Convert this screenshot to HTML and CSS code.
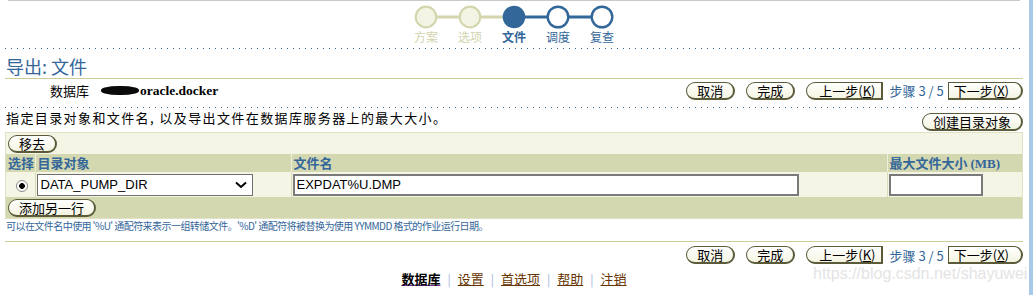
FILE: index.html
```html
<!DOCTYPE html>
<html lang="zh">
<head>
<meta charset="utf-8">
<title>导出: 文件</title>
<link rel="stylesheet" href="styles.css">
</head>
<body>
<div class="page">
  <main class="main">
    <div class="topline"></div>
    <nav class="train">
      <svg class="train-svg" width="200" height="24" viewBox="0 0 200 24">
        <line x1="12" y1="12" x2="100" y2="12" stroke="#d4d6ae" stroke-width="3"/>
        <line x1="100" y1="12" x2="188" y2="12" stroke="#336699" stroke-width="3"/>
        <circle cx="12" cy="12" r="10.3" fill="#f4f4e4" stroke="#d4d6ae" stroke-width="2.2"/>
        <circle cx="56" cy="12" r="10.3" fill="#f4f4e4" stroke="#d4d6ae" stroke-width="2.2"/>
        <circle cx="100" cy="12" r="11.3" fill="#336699"/>
        <circle cx="144" cy="12" r="10.3" fill="#fff" stroke="#336699" stroke-width="2.4"/>
        <circle cx="188" cy="12" r="10.3" fill="#fff" stroke="#336699" stroke-width="2.4"/>
      </svg>
      <div class="train-labels">
        <span class="step done">方案</span>
        <span class="step done">选项</span>
        <span class="step current">文件</span>
        <span class="step todo">调度</span>
        <span class="step todo">复查</span>
      </div>
    </nav>
    <div class="dots"></div>
    <h1 class="title">导出: 文件</h1>
    <div class="head-row">
      <div class="db-info">
        <span class="db-label">数据库</span>
        <span class="db-value"><span class="blot"></span>oracle.docker</span>
      </div>
      <div class="nav-buttons">
        <button class="btn">取消</button>
        <button class="btn">完成</button>
        <button class="btn btn-prev">上一步(<u>K</u>)</button>
        <span class="step-count">步骤 3 / 5</span>
        <button class="btn btn-next">下一步(<u>X</u>)</button>
      </div>
    </div>
    <div class="dots dots-2"></div>
    <div class="instr-row">
      <span class="instr">指定目录对象和文件名, 以及导出文件在数据库服务器上的最大大小。</span>
      <button class="btn">创建目录对象</button>
    </div>
    <div class="table-box">
      <div class="tb-toolbar"><button class="btn btn-small">移去</button></div>
      <table class="grid">
        <colgroup>
          <col class="c1"><col class="c2"><col class="c3"><col class="c4">
        </colgroup>
        <thead>
          <tr><th>选择</th><th>目录对象</th><th>文件名</th><th>最大文件大小 <span class="mb">(MB)</span></th></tr>
        </thead>
        <tbody>
          <tr>
            <td class="radio-cell"><input type="radio" name="sel" class="radio" checked></td>
            <td>
              <div class="select-wrap">
                <select class="select"><option>DATA_PUMP_DIR</option></select>
                <svg class="chev" width="12" height="8" viewBox="0 0 12 8"><path d="M1 1.5 L6 6 L11 1.5" fill="none" stroke="#000" stroke-width="2"/></svg>
              </div>
            </td>
            <td><input class="text-in file-in" type="text" value="EXPDAT%U.DMP"></td>
            <td><input class="text-in size-in" type="text" value=""></td>
          </tr>
        </tbody>
      </table>
      <div class="tb-footer"><button class="btn btn-small">添加另一行</button></div>
    </div>
    <p class="hint">可以在文件名中使用 '%U' 通配符来表示一组转储文件。'%D' 通配符将被替换为使用 YYMMDD 格式的作业运行日期。</p>
    <div class="bottom-bar">
      <div class="nav-buttons">
        <button class="btn">取消</button>
        <button class="btn">完成</button>
        <button class="btn btn-prev">上一步(<u>K</u>)</button>
        <span class="step-count">步骤 3 / 5</span>
        <button class="btn btn-next">下一步(<u>X</u>)</button>
      </div>
    </div>
    <footer class="links">
      <a class="lnk active" href="#">数据库</a><span class="sep">|</span>
      <a class="lnk" href="#">设置</a><span class="sep">|</span>
      <a class="lnk" href="#">首选项</a><span class="sep">|</span>
      <a class="lnk" href="#">帮助</a><span class="sep">|</span>
      <a class="lnk" href="#">注销</a>
    </footer>
  </main>
  <div class="strip"></div>
  <div class="watermark">https://blog.csdn.net/shayuwei</div>
</div>
</body>
</html>
```

FILE: styles.css
```css
* { box-sizing: border-box; }
html, body { margin: 0; padding: 0; }
body {
  font-family: "Noto Sans CJK SC", "Liberation Sans", sans-serif;
  font-size: 13px;
  color: #000;
  background: #fff;
}
.page {
  display: flex;
  height: 295px;
  position: relative;
  overflow: hidden;
}
.main {
  flex: 1;
  padding: 0 6px 0 5px;
}
.strip {
  width: 4px;
  background: #a9c9e9;
}
.topline {
  height: 1px;
  background: #c9c9c9;
  margin: 0 3px;
}
.train {
  display: flex;
  flex-direction: column;
  align-items: center;
  margin-top: 4px;
}
.train-svg { display: block; }
.train-labels {
  display: flex;
  margin-top: 1px;
}
.step {
  width: 44px;
  text-align: center;
  font-size: 12px;
  line-height: 14px;
}
.step.done { color: #d2d4ae; }
.step.current { color: #336699; font-weight: bold; }
.step.todo { color: #336699; }
.dots {
  height: 1px;
  margin-top: 4px;
  background: repeating-linear-gradient(to right, #336699 0 1px, transparent 1px 6px);
}
.title {
  margin: 6px 0 0;
  font-size: 18px;
  line-height: 22px;
  font-weight: normal;
  color: #336699;
  padding: 0 0 1px 1px;
  border-bottom: 1px solid #cccc99;
}
.head-row {
  display: flex;
  justify-content: space-between;
  align-items: center;
  padding-top: 2px;
  height: 21px;
}
.db-info {
  display: flex;
  align-items: center;
  padding-left: 45px;
}
.db-label { width: 54px; }
.db-value {
  font-family: "Liberation Serif", serif;
  font-weight: bold;
  font-size: 13.5px;
  display: inline-flex;
  align-items: center;
}
.blot {
  display: inline-block;
  width: 38px;
  height: 9px;
  background: #0a0a0a;
  border-radius: 45%;
  margin-right: 1px;
  margin-left: -3px;
}
.nav-buttons {
  display: flex;
  align-items: center;
}
.btn {
  font-family: "Noto Sans CJK SC", "Liberation Sans", sans-serif;
  font-size: 13px;
  line-height: 15px;
  height: 18px;
  padding: 0 10px;
  margin: 0;
  color: #000;
  background: linear-gradient(#ffffff, #f4f4e2);
  border: 1px solid #5b5b3a;
  border-right-width: 2px;
  border-bottom-width: 2px;
  border-radius: 9px;
  cursor: pointer;
}
.nav-buttons .btn + .btn { margin-left: 11px; }
.btn u { text-decoration: underline; }
.btn-prev {
  border-radius: 9px 0 0 9px;
  padding: 0 6px 0 12px;
}
.btn-next {
  border-radius: 0 9px 9px 0;
  padding: 0 12px 0 5px;
}
.step-count {
  color: #336699;
  margin: 0 4px 0 6px;
}
.nav-buttons .btn-next { margin-left: 0; }
.dots-2 { margin-top: 7px; }
.instr-row {
  display: flex;
  justify-content: space-between;
  align-items: flex-start;
  padding-top: 5px;
  height: 24px;
}
.instr {
  margin-left: 1px;
  margin-top: -3px;
  letter-spacing: 1.4px;
  line-height: 16px;
}
.table-box {
  background: #f5f5e6;
  border: 1px solid #dfe2c4;
}
.tb-toolbar {
  height: 21px;
  padding: 1px 0 0 2px;
}
.btn-small { padding: 0 10px; }
.grid {
  width: 100%;
  border-collapse: collapse;
  table-layout: fixed;
}
.c1 { width: 29px; }
.c2 { width: 256px; }
.c3 { width: 596px; }
.grid th {
  background: #d3d8b1;
  color: #336699;
  font-weight: bold;
  text-align: left;
  height: 18px;
  padding: 0 0 0 2px;
  line-height: 16px;
  border-left: 1px solid #eef0dc;
  white-space: nowrap;
}
.grid th:first-child { border-left: none; }
.mb {
  font-family: "Liberation Serif", serif;
}
.grid td {
  height: 25px;
  padding: 0 0 0 1px;
  border-left: 1px solid #d8dcb8;
  vertical-align: middle;
}
.grid td:first-child { border-left: none; }
.radio-cell { text-align: center; }
.radio {
  appearance: none;
  -webkit-appearance: none;
  width: 12px;
  height: 12px;
  margin: 0 0 0 2px;
  border-radius: 50%;
  border: 1px solid #8a8a8a;
  background: radial-gradient(circle, #000 0 2.6px, #fff 3.1px);
  vertical-align: middle;
}
.select-wrap {
  position: relative;
  width: 216px;
}
.select {
  appearance: none;
  -webkit-appearance: none;
  display: block;
  width: 216px;
  height: 22px;
  border: 1px solid #6f6f6f;
  border-radius: 0;
  background: #fff;
  font-family: "Liberation Sans", sans-serif;
  font-size: 13px;
  padding: 0 0 0 3px;
  color: #000;
}
.chev {
  position: absolute;
  right: 6px;
  top: 7px;
  pointer-events: none;
}
.text-in {
  display: block;
  height: 22px;
  border: 2px solid #7a7a7a;
  border-radius: 0;
  background: #fff;
  font-family: "Liberation Sans", sans-serif;
  font-size: 13px;
  padding: 0 0 0 2px;
  color: #000;
}
.file-in { width: 506px; }
.size-in { width: 94px; }
.tb-footer {
  background: #d3d8b1;
  height: 21px;
  padding: 1px 0 0 2px;
}
.hint {
  margin: 0;
  padding: 1px 0 0 1px;
  font-size: 10px;
  letter-spacing: -0.55px;
  line-height: 12px;
  height: 22px;
  color: #336699;
}
.bottom-bar {
  border-top: 1px solid #cccc99;
  display: flex;
  justify-content: flex-end;
  padding-top: 2px;
  height: 25px;
}
.links {
  display: flex;
  justify-content: center;
  align-items: center;
  margin-top: 5px;
  line-height: 16px;
}
.lnk {
  color: #663300;
  text-decoration: underline;
  font-size: 13px;
}
.lnk.active {
  color: #000;
  font-weight: bold;
  text-decoration-color: #7a2a99;
}
.sep {
  color: #a4b4e0;
  margin: 0 7px;
  font-size: 12px;
}
.watermark {
  position: absolute;
  left: 813px;
  top: 265px;
  font-family: "Liberation Sans", sans-serif;
  font-size: 16px;
  color: #e4e4e4;
  pointer-events: none;
}
```
